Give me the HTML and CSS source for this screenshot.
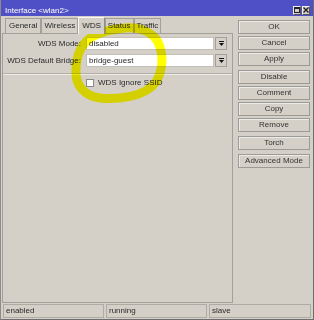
FILE: index.html
```html
<!DOCTYPE html>
<html lang="en">
<head>
    <meta charset="UTF-8">
    <title>Interface &lt;wlan2&gt;</title>
    <link rel="stylesheet" href="styles.css">
</head>
<body>

    <div class="window">
        <div class="titlebar">
            <span class="title">Interface &lt;wlan2&gt;</span>
            <div class="tb-buttons">
                <span class="tb-btn"><svg width="6" height="6"><rect x="0.5" y="0.5" width="5" height="5" fill="none" stroke="#222"/><line x1="0" y1="1.5" x2="6" y2="1.5" stroke="#222"/></svg></span>
                <span class="tb-btn"><svg width="6" height="6"><path d="M0.5 0.5L5.5 5.5M5.5 0.5L0.5 5.5" stroke="#222" stroke-width="1.4"/></svg></span>
            </div>
        </div>

        <div class="main">
            <div class="left">
                <div class="tabs">
                    <div class="tab first">General</div>
                    <div class="tab">Wireless</div>
                    <div class="tab active">WDS</div>
                    <div class="tab">Status</div>
                    <div class="tab">Traffic</div>
                </div>
                <div class="pane">
                    <div class="form">
                        <div class="lbl">WDS Mode:</div>
                        <div class="combo">
                            <div class="field">disabled</div>
                            <div class="drop"><svg width="5" height="5"><rect x="0" y="0" width="5" height="1" fill="#111"/><path d="M0 2H5L2.5 5Z" fill="#111"/></svg></div>
                        </div>
                        <div class="lbl">WDS Default Bridge:</div>
                        <div class="combo">
                            <div class="field">bridge-guest</div>
                            <div class="drop"><svg width="5" height="5"><rect x="0" y="0" width="5" height="1" fill="#111"/><path d="M0 2H5L2.5 5Z" fill="#111"/></svg></div>
                        </div>
                    </div>
                    <div class="sep"></div>
                    <div class="check-row">
                        <span class="checkbox"></span>
                        <span>WDS Ignore SSID</span>
                    </div>
                </div>
            </div>

            <div class="buttons">
                <div class="btn">OK</div>
                <div class="btn">Cancel</div>
                <div class="btn">Apply</div>
                <div class="btn group">Disable</div>
                <div class="btn">Comment</div>
                <div class="btn">Copy</div>
                <div class="btn">Remove</div>
                <div class="btn group">Torch</div>
                <div class="btn group">Advanced Mode</div>
            </div>
        </div>

        <div class="statusbar">
            <div class="cell">enabled</div>
            <div class="cell">running</div>
            <div class="cell last">slave</div>
        </div>

        <!-- yellow marker circle drawn over the screenshot -->
        <svg class="highlight" width="314" height="320">
            <path d="M90 38 C100 32 112 29 125 28 C140 27 152 32 158 42 C164 55 163 70 156 82 C146 96 120 100 100 98 C84 96 75 85 76 70 C76 56 80 46 90 38 Z"
                  fill="none" stroke="#ffff00" stroke-width="9" stroke-linecap="round"/>
        </svg>
    </div>

</body>
</html>
```

FILE: styles.css
```css
body {
    margin: 0;
    font-family: "Liberation Sans", Arial, sans-serif;
    font-size: 8px;
    color: #2a2a2a;
}

.window {
    position: relative;
    width: 314px;
    height: 320px;
    box-sizing: border-box;
    background-color: #d4d0c8;
    border-left: 1px solid #8c8c8c;
    border-right: 1px solid #6e6e6e;
    border-bottom: 1px solid #6e6e6e;
    display: flex;
    flex-direction: column;
}

.titlebar {
    height: 16px;
    box-sizing: border-box;
    padding: 4px 3px 0 4px;
    background-color: #5050c6;
    color: white;
    display: flex;
    align-items: center;
    justify-content: space-between;
}

.tb-buttons {
    display: flex;
    gap: 1px;
}
.tb-btn {
    width: 8px;
    height: 9px;
    box-sizing: border-box;
    background-color: #d4d0c8;
    border: 1px solid #f0f0f0;
    border-right-color: #555;
    border-bottom-color: #555;
    display: flex;
    align-items: center;
    justify-content: center;
}
.tb-btn svg {
    display: block;
}

.main {
    display: flex;
}

.left {
    width: 231px;
    margin-left: 1px;
}

.tabs {
    margin-top: 1px;
    height: 16px;
    padding-left: 3px;
    display: flex;
    align-items: flex-end;
}
.tab {
    height: 15px;
    box-sizing: border-box;
    padding: 0 2px;
    line-height: 14px;
    border: 1px solid #a3a09a;
    border-bottom: none;
}
.tab.first {
    padding: 0 3px;
}
.tab.active {
    height: 17px;
    margin-bottom: -1px;
    padding: 0 3px;
    line-height: 16px;
    background-color: #d4d0c8;
    border-color: #fafafa;
    border-right-color: #8e8c86;
    position: relative;
    z-index: 1;
}

.pane {
    height: 270px;
    box-sizing: border-box;
    border: 1px solid #a3a09a;
}

.form {
    padding: 3px 5px 0 0;
    display: grid;
    grid-template-columns: 80px 1fr;
    column-gap: 3px;
    row-gap: 4px;
    align-items: center;
}
.lbl {
    text-align: right;
    padding-right: 2px;
    white-space: nowrap;
}
.combo {
    display: flex;
    height: 13px;
}
.field {
    flex: 1;
    background-color: white;
    border: 1px solid #c4c1ba;
    padding-left: 2px;
    line-height: 11px;
}
.drop {
    width: 12px;
    margin-left: 1px;
    box-sizing: border-box;
    border: 1px solid #a3a09a;
    display: flex;
    align-items: center;
    justify-content: center;
}
.drop svg {
    display: block;
}

.sep {
    margin-top: 6px;
    height: 0;
    border-top: 1px solid #b2afa8;
    border-bottom: 1px solid #ecebe7;
}

.check-row {
    margin-top: 3px;
    padding-left: 83px;
    display: flex;
    align-items: center;
    gap: 4px;
    height: 9px;
}
.checkbox {
    width: 8px;
    height: 8px;
    box-sizing: border-box;
    background-color: white;
    border: 1px solid #8a8a8a;
}

.buttons {
    width: 72px;
    margin: 4px 0 0 5px;
    display: flex;
    flex-direction: column;
    gap: 2px;
}
.btn {
    height: 14px;
    box-sizing: border-box;
    border: 1px solid #9c9a94;
    box-shadow: inset 1px 1px 0 #ecebe7;
    text-align: center;
    line-height: 12px;
    color: #333;
}
.btn.group {
    margin-top: 2px;
}

.statusbar {
    height: 16px;
    box-sizing: border-box;
    padding: 1px 2px 1px 2px;
    display: flex;
    gap: 2px;
}
.cell {
    width: 101px;
    box-sizing: border-box;
    border: 1px solid #aeaba4;
    padding-left: 2px;
    line-height: 12px;
}
.cell.last {
    flex: 1;
}

/* marker stroke lets the text below show through */
.highlight {
    position: absolute;
    left: -1px;
    top: 0;
    pointer-events: none;
    mix-blend-mode: multiply;
}
```
